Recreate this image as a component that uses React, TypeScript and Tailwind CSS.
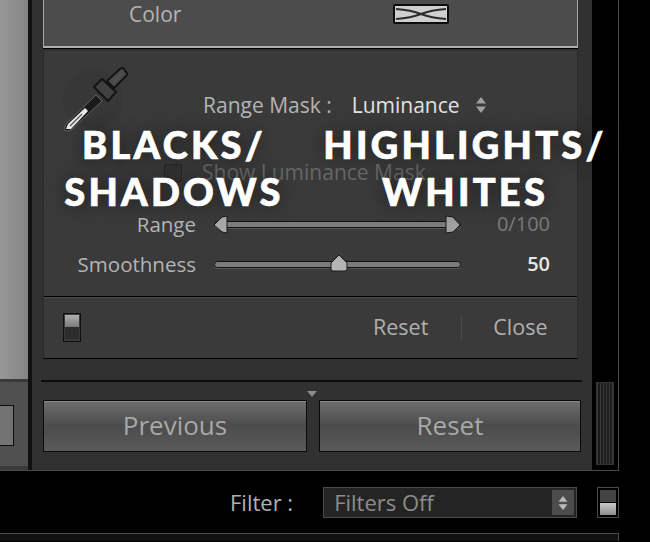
import React from 'react';

const uiFont = "[font-family:'Open_Sans','Liberation_Sans',sans-serif]";

function Updown({ className = '' }: { className?: string }) {
  return (
    <svg width="12" height="18" viewBox="0 0 12 18" className={className}>
      <path d="M6 1 L11 7.5 H1 Z" fill="currentColor" />
      <path d="M6 17 L11 10.5 H1 Z" fill="currentColor" />
    </svg>
  );
}

function Eyedropper() {
  return (
    <svg width="66" height="66" viewBox="0 0 66 66" className="shrink-0">
      <circle cx="30" cy="32" r="30" fill="#373737" />
      <path d="M1 63 L3 57 L33 28 L39 34 L8 63 Q4 65 1 63 Z" fill="#1a1a1a" stroke="#707070" strokeWidth="0.8" />
      <path d="M3 62 L5 57 L22 41 L25 44 L8 62 Z" fill="#e8e8e8" />
      <path d="M7 59 L19 47" stroke="#555" strokeWidth="1.2" />
      <path d="M31 20 L39 12 L53 25 L45 34 Z" fill="#414141" stroke="#141414" strokeWidth="2" />
      <path d="M44 14 L57 2 Q59 0 61 2 L63 5 Q65 7 63 9 L51 21 Z" fill="#4c4c4c" stroke="#141414" strokeWidth="2" />
    </svg>
  );
}

function Track({ children }: { children?: React.ReactNode }) {
  return (
    <div className="relative h-[7px] w-[247px] rounded-full border border-[#111] bg-[#7c7c7c] shadow-[0_1px_0_#555]">
      {children}
    </div>
  );
}

function SliderRow({ label, value, valueClass, children }: { label: string; value: string; valueClass: string; children: React.ReactNode }) {
  return (
    <div className="flex h-[24px] items-center">
      <span className="w-[152px] text-right text-[20.5px] text-[#b4b4b4]">{label}</span>
      <div className="ml-[18px]">{children}</div>
      <span className={`ml-auto mr-[27px] text-[20px] ${valueClass}`}>{value}</span>
    </div>
  );
}

function BigButton({ label, className }: { label: string; className: string }) {
  return (
    <div className={`flex h-[52px] shrink-0 items-center justify-center border border-[#0a0a0a] bg-gradient-to-b from-[#6e6e6e] via-[#4c4c4c] to-[#5a5a5a] pb-[2px] text-[26px] text-[#a8a8a8] shadow-[inset_0_1px_0_#8a8a8a] ${className}`}>
      {label}
    </div>
  );
}

export default function App() {
  return (
    <div className={`relative h-[542px] w-[650px] overflow-hidden bg-black ${uiFont}`}>
      <div className="flex h-[471px] w-[619px] border-r border-b border-[#4a4a4a]">
        {/* left film strip panel */}
        <div className="flex w-[28px] flex-col bg-[#3a3a3a]">
          <div className="h-[379px] bg-gradient-to-r from-[#979797] to-[#858585]" />
          <div className="mt-[3px] flex h-[84px] flex-col bg-[#505050] pt-[23px]">
            <div className="h-[41px] w-[14px] border border-l-0 border-[#0c0c0c] bg-[#737373]" />
          </div>
        </div>
        <div className="w-[4px] bg-[#111]" />

        {/* develop panel */}
        <div className="flex w-[560px] flex-col bg-[#313131] pl-[11px] pr-[14px]">
          <div className="flex h-[48px] items-start border-x border-b-2 border-x-[#a5a5a5] border-b-[#b0b0b0] bg-[#4c4c4c]">
            <span className="ml-[85px] text-[21px] leading-[28px] text-[#b4b4b4]">Color</span>
            <div className="ml-[212px] mt-[4px] h-[20px] w-[56px] rounded-[2px] border-2 border-[#0c0c0c] bg-[#cfcfcf]">
              <svg width="52" height="16" viewBox="0 0 52 16">
                <path d="M1 3 Q16 4 26 8 Q36 4 51 3 M1 13 Q16 12 26 8 Q36 12 51 13" stroke="#2c2c2c" strokeWidth="2" fill="none" />
              </svg>
            </div>
          </div>
          <div className="h-[1px] bg-black" />

          <div className="mt-[2px] flex h-[308px] flex-col border-x border-b border-x-[#2a2a2a] border-b-black bg-[#3a3a3a]">
            <div className="flex h-[245px] flex-col">
              <div className="ml-[19px] mt-[16px] flex h-[66px] items-start">
                <Eyedropper />
                <span className="ml-[74px] mt-[24px] text-[21px] leading-[28px] text-[#b4b4b4]">Range Mask :</span>
                <span className="ml-[20px] mt-[24px] text-[21px] leading-[28px] text-[#e2e2e2]">Luminance</span>
                <Updown className="ml-[15px] mt-[29px] text-[#a0a0a0]" />
              </div>
              <div className="ml-[120px] mt-[28px] flex h-[24px] items-center">
                <div className="h-[18px] w-[18px] rounded-[2px] border border-[#272727] bg-[#343434]" />
                <span className="ml-[20px] text-[21px] text-[#686868]">Show Luminance Mask</span>
              </div>
              <div className="mt-[27px]">
                <SliderRow label="Range" value="0/100" valueClass="text-[#7b7b7b]">
                  <Track>
                    <svg width="16" height="19" viewBox="0 0 16 19" className="absolute left-[-2px] top-[-7px]">
                      <path d="M1 10 L9 2 L14 1 V18 L9 17 Z" fill="#a8a8a8" stroke="#1a1a1a" />
                    </svg>
                    <svg width="18" height="19" viewBox="0 0 18 19" className="absolute right-[-2px] top-[-7px]">
                      <path d="M2 1 L9 2 L16 10 L9 17 L2 18 Z" fill="#a0a0a0" stroke="#1a1a1a" />
                    </svg>
                  </Track>
                </SliderRow>
              </div>
              <div className="mt-[16px]">
                <SliderRow label="Smoothness" value="50" valueClass="font-semibold text-[#e6e6e6]">
                  <Track>
                    <svg width="20" height="18" viewBox="0 0 20 18" className="absolute left-[114px] top-[-8px]">
                      <path d="M10 1 L18 9 V15 Q18 17 16 17 H4 Q2 17 2 15 V9 Z" fill="#b4b4b4" stroke="#1a1a1a" />
                    </svg>
                  </Track>
                </SliderRow>
              </div>
            </div>
            <div className="flex flex-1 items-center border-t border-t-black pl-[19px] shadow-[inset_0_1px_0_#484848]">
              <div className="flex h-[29px] w-[18px] flex-col border border-[#0f0f0f] p-[1px]">
                <div className="h-[12px] bg-gradient-to-b from-[#b0b0b0] to-[#7a7a7a]" />
                <div className="h-[12px] bg-[#2c2c2c]" />
              </div>
              <span className="ml-[292px] text-[21.5px] text-[#b0b0b0]">Reset</span>
              <div className="ml-[33px] h-[22px] w-[1px] bg-[#4c4c4c]" />
              <span className="ml-[31px] text-[21.5px] text-[#b0b0b0]">Close</span>
            </div>
          </div>

          <div className="-ml-[2px] -mr-[4px] mt-[21px] h-[2px] bg-[#0c0c0c]" />
          <div className="flex h-[18px] items-end justify-center pl-[3px]">
            <div className="mb-[3px] h-0 w-0 border-x-[5px] border-t-[6px] border-x-transparent border-t-[#8a8a8a]" />
          </div>
          <div className="flex gap-[12px]">
            <BigButton label="Previous" className="w-[264px]" />
            <BigButton label="Reset" className="w-[262px]" />
          </div>
        </div>

        {/* scrollbar column */}
        <div className="flex flex-1 flex-col justify-end pb-[5px] pl-[4px]">
          <div className="h-[83px] w-[18px] border border-[#333] bg-[repeating-linear-gradient(90deg,#3a3a3a_0,#3a3a3a_1px,#1c1c1c_1px,#1c1c1c_3px)]" />
        </div>
      </div>

      {/* filter bar */}
      <div className="flex h-[62px] w-[620px] items-center pt-[1px]">
        <span className="ml-[230px] text-[22px] text-[#b0b0b0]">Filter :</span>
        <div className="ml-[30px] flex h-[31px] w-[254px] shrink-0 items-center border border-[#4a4a4a] bg-[#242424] p-[2px] pl-[10px]">
          <span className="text-[22px] text-[#8c8c8c]">Filters Off</span>
          <div className="ml-auto flex h-[25px] w-[22px] items-center justify-center bg-[#4c4c4c]">
            <Updown className="h-[16px] text-[#bbb]" />
          </div>
        </div>
        <div className="ml-[20px] flex h-[31px] w-[22px] shrink-0 flex-col border border-[#4a4a4a] p-[2px]">
          <div className="h-[12px] bg-[#444]" />
          <div className="mt-[1px] h-[13px] bg-gradient-to-b from-[#c8c8c8] to-[#8e8e8e]" />
        </div>
      </div>
      <div className="h-[8px] w-[619px] border-t border-r border-[#4a4a4a] bg-[#111]" />

      {/* caption overlays */}
      <div className="absolute left-[63px] top-[121px] w-[222px] whitespace-nowrap text-center text-[38px] font-black leading-[47px] tracking-[0.085em] text-white [-webkit-text-stroke:0.7px_white] [font-family:'Lato',sans-serif] [text-shadow:0_0_18px_rgba(0,0,0,0.55)]">
        BLACKS/
        <br />
        SHADOWS
      </div>
      <div className="absolute left-[322px] top-[121px] w-[286px] whitespace-nowrap text-center text-[38px] font-black leading-[47px] tracking-[0.085em] text-white [-webkit-text-stroke:0.7px_white] [font-family:'Lato',sans-serif] [text-shadow:0_0_18px_rgba(0,0,0,0.55)]">
        HIGHLIGHTS/
        <br />
        WHITES
      </div>
    </div>
  );
}
